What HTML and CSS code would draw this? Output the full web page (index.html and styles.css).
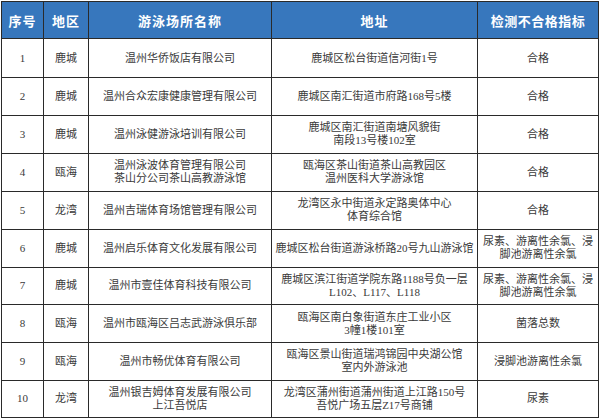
FILE: index.html
```html
<!DOCTYPE html>
<html lang="zh">
<head>
<meta charset="utf-8">
<link rel="stylesheet" href="styles.css">
</head>
<body>
<div class="wrap">
<table class="tbl">
<colgroup>
<col class="c1"><col class="c2"><col class="c3"><col class="c4"><col class="c5">
</colgroup>
<thead>
<tr class="hd"><th>序号</th><th>地区</th><th>游泳场所名称</th><th>地址</th><th class="nls">检测不合格指标</th></tr>
</thead>
<tbody>
<tr class="r39"><td class="num">1</td><td>鹿城</td><td>温州华侨饭店有限公司</td><td>鹿城区松台街道信河街1号</td><td>合格</td></tr>
<tr class="r38"><td class="num">2</td><td>鹿城</td><td>温州合众宏康健康管理有限公司</td><td>鹿城区南汇街道市府路168号5楼</td><td>合格</td></tr>
<tr class="r37"><td class="num">3</td><td>鹿城</td><td>温州泳健游泳培训有限公司</td><td>鹿城区南汇街道南塘风貌街<br>南段13号楼102室</td><td>合格</td></tr>
<tr class="r38"><td class="num">4</td><td>瓯海</td><td>温州泳波体育管理有限公司<br>茶山分公司茶山高教游泳馆</td><td>瓯海区茶山街道茶山高教园区<br>温州医科大学游泳馆</td><td>合格</td></tr>
<tr class="r38"><td class="num">5</td><td>龙湾</td><td>温州吉瑞体育场馆管理有限公司</td><td>龙湾区永中街道永定路奥体中心<br>体育综合馆</td><td>合格</td></tr>
<tr class="r38"><td class="num">6</td><td>鹿城</td><td>温州启乐体育文化发展有限公司</td><td>鹿城区松台街道游泳桥路20号九山游泳馆</td><td>尿素、游离性余氯、浸<br>脚池游离性余氯</td></tr>
<tr class="r37"><td class="num">7</td><td>鹿城</td><td>温州市壹佳体育科技有限公司</td><td>鹿城区滨江街道学院东路1188号负一层<br>L102、L117、L118</td><td>尿素、游离性余氯、浸<br>脚池游离性余氯</td></tr>
<tr class="r38"><td class="num">8</td><td>瓯海</td><td>温州市瓯海区吕志武游泳俱乐部</td><td>瓯海区南白象街道东庄工业小区<br>3幢1楼101室</td><td>菌落总数</td></tr>
<tr class="r37"><td class="num">9</td><td>瓯海</td><td>温州市畅优体育有限公司</td><td>瓯海区景山街道瑞鸿锦园中央湖公馆<br>室内外游泳池</td><td>浸脚池游离性余氯</td></tr>
<tr class="r37"><td class="num">10</td><td>龙湾</td><td>温州银吉姆体育发展有限公司<br>上江吾悦店</td><td>龙湾区蒲州街道蒲州街道上江路150号<br>吾悦广场五层Z17号商铺</td><td>尿素</td></tr>
</tbody>
</table>
</div>
</body>
</html>
```
FILE: styles.css
```css
html, body {
  margin: 0;
  padding: 0;
  background: #ffffff;
}
.wrap {
  padding: 1px 2px 0 1px;
}
.tbl {
  width: 597px;
  border-collapse: collapse;
  table-layout: fixed;
  font-family: "Liberation Serif", "Noto Sans CJK SC", serif;
  font-size: 11px;
  color: #3a3a3a;
}
.c1 { width: 42px; }
.c2 { width: 45px; }
.c3 { width: 183px; }
.c4 { width: 206px; }
.c5 { width: 121px; }
.tbl th, .tbl td {
  border: 1.5px solid #2a2a2a;
  text-align: center;
  vertical-align: middle;
  padding: 0;
  white-space: nowrap;
  overflow: hidden;
  line-height: 13px;
}
.hd {
  height: 37px;
  background: #3777bd;
}
.hd th {
  color: #ffffff;
  font-family: "Noto Sans CJK SC", sans-serif;
  font-weight: 700;
  font-size: 13px;
  letter-spacing: 1px;
}
.hd th.nls {
  letter-spacing: 0.5px;
}
.num {
  font-size: 11px;
}
.r39 { height: 39px; }
.r38 { height: 38px; }
.r37 { height: 37.5px; }
```
